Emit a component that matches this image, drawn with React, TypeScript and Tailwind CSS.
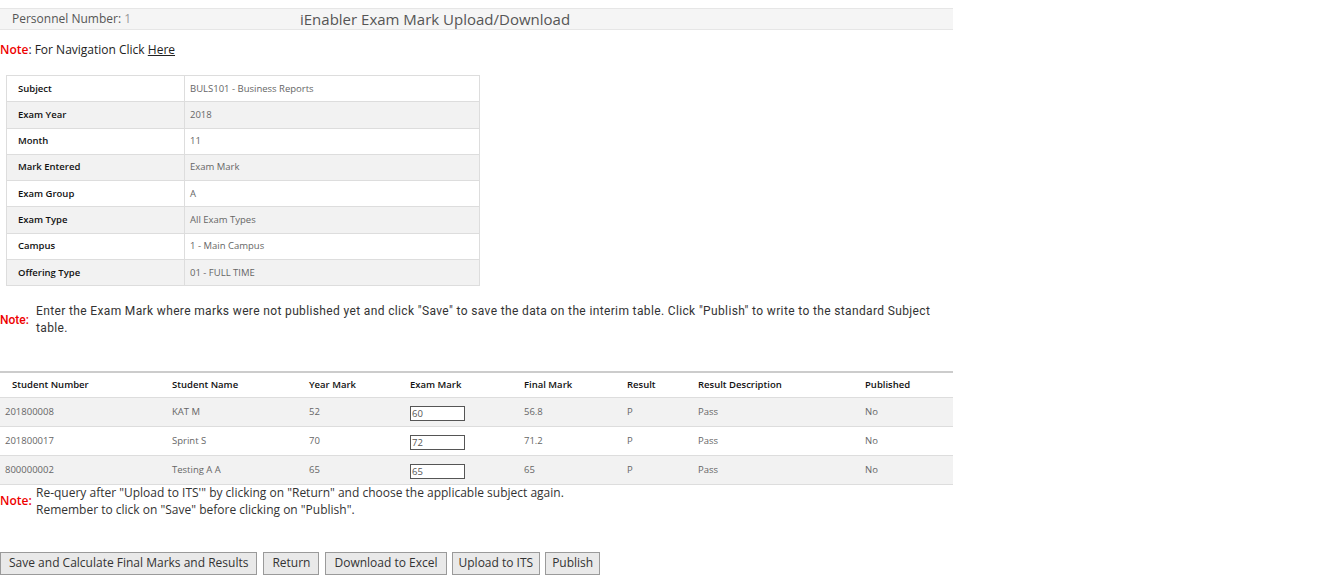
const details: [string, string][] = [
  ['Subject', 'BULS101 - Business Reports'],
  ['Exam Year', '2018'],
  ['Month', '11'],
  ['Mark Entered', 'Exam Mark'],
  ['Exam Group', 'A'],
  ['Exam Type', 'All Exam Types'],
  ['Campus', '1 - Main Campus'],
  ['Offering Type', '01 - FULL TIME'],
];

const students = [
  { num: '201800008', name: 'KAT M', year: '52', exam: '60', final: '56.8', result: 'P', desc: 'Pass', pub: 'No' },
  { num: '201800017', name: 'Sprint S', year: '70', exam: '72', final: '71.2', result: 'P', desc: 'Pass', pub: 'No' },
  { num: '800000002', name: 'Testing A A', year: '65', exam: '65', final: '65', result: 'P', desc: 'Pass', pub: 'No' },
];

const buttons = [
  { label: 'Save and Calculate Final Marks and Results', cls: 'px-[8px]' },
  { label: 'Return', cls: 'px-[8px] ml-[6px]' },
  { label: 'Download to Excel', cls: 'px-[8px] ml-[6px]' },
  { label: 'Upload to ITS', cls: 'px-[6px] ml-[5px]' },
  { label: 'Publish', cls: 'px-[6px] ml-[5px]' },
];

export default function App() {
  return (
    <div className="w-[1341px] h-[583px] bg-white text-[#333] font-['Open_Sans',sans-serif] overflow-hidden">
      {/* Header bar */}
      <div className="pt-2">
        <div className="w-[953px] h-[22px] bg-[#f5f5f5] border-y border-[#e6e6e6] flex items-center">
          <span className="pl-3 w-[300px] text-[12px] text-[#555]">
            Personnel Number: <span className="text-[#999]">1</span>
          </span>
          <span className="text-[15px] text-[#555]">iEnabler Exam Mark Upload/Download</span>
        </div>
      </div>

      <div className="mt-[13px] text-[12px] text-[#222] leading-[14px]">
        <span className="text-[#e00] font-semibold">Note</span>: For Navigation Click <span className="underline">Here</span>
      </div>

      {/* Details table */}
      <table className="ml-[6px] mt-[18px] w-[474px] border-collapse border border-[#ddd] text-[9.5px]">
        <tbody>
          {details.map(([k, v], i) => (
            <tr key={k} className={`h-[26.3px] ${i % 2 ? 'bg-[#f2f2f2]' : 'bg-white'}`}>
              <td className="w-[178px] pl-[11px] border border-[#ddd] font-semibold text-[#111]">{k}</td>
              <td className="pl-[5px] border border-[#ddd] text-[#666]">{v}</td>
            </tr>
          ))}
        </tbody>
      </table>

      {/* Note */}
      <div className="mt-[17px] flex items-center font-['Roboto',sans-serif] w-[953px]">
        <span className="w-[36px] text-[12px] text-[#e00] font-medium shrink-0">Note:</span>
        <span className="text-[12px] leading-[17px] text-[#333] tracking-[0.36px]">
          Enter the Exam Mark where marks were not published yet and click "Save" to save the data on the interim table. Click "Publish" to write to the standard Subject table.
        </span>
      </div>

      {/* Students table */}
      <table className="mt-[34px] w-[953px] border-collapse text-[9.5px] border-t-2 border-[#ccc]">
        <thead>
          <tr className="h-[25px] border-b border-[#ddd]">
            <th className="w-[172px] pl-[12px] text-left font-semibold text-[#111]">Student Number</th>
            <th className="w-[137px] text-left font-semibold text-[#111]">Student Name</th>
            <th className="w-[101px] text-left font-semibold text-[#111]">Year Mark</th>
            <th className="w-[114px] text-left font-semibold text-[#111]">Exam Mark</th>
            <th className="w-[103px] text-left font-semibold text-[#111]">Final Mark</th>
            <th className="w-[71px] text-left font-semibold text-[#111]">Result</th>
            <th className="w-[167px] text-left font-semibold text-[#111]">Result Description</th>
            <th className="text-left font-semibold text-[#111]">Published</th>
          </tr>
        </thead>
        <tbody>
          {students.map((s, i) => (
            <tr key={s.num} className={`h-[29px] border-b border-[#ddd] text-[#666] ${i % 2 ? 'bg-white' : 'bg-[#f2f2f2]'}`}>
              <td className="pl-[5px]">{s.num}</td>
              <td>{s.name}</td>
              <td>{s.year}</td>
              <td>
                <input
                  defaultValue={s.exam}
                  className="w-[55px] h-[15px] border border-[#555] bg-white px-[1px] text-[9.5px] text-[#555] mt-[3px]"
                />
              </td>
              <td>{s.final}</td>
              <td>{s.result}</td>
              <td>{s.desc}</td>
              <td>{s.pub}</td>
            </tr>
          ))}
        </tbody>
      </table>

      {/* Note 2 */}
      <div className="-mt-[1px] flex items-center w-[953px]">
        <span className="w-[36px] text-[12px] text-[#e00] font-semibold shrink-0">Note:</span>
        <span className="text-[12px] leading-[17px] text-[#333]">
          Re-query after "Upload to ITS'" by clicking on "Return" and choose the applicable subject again.
          <br />
          Remember to click on "Save" before clicking on "Publish".
        </span>
      </div>

      {/* Buttons */}
      <div className="mt-[34px] flex">
        {buttons.map((b) => (
          <button
            key={b.label}
            className={`h-[23px] bg-[#e9e9e9] border border-[#9a9a9a] text-[12px] text-[#333] leading-none ${b.cls}`}
          >
            {b.label}
          </button>
        ))}
      </div>
    </div>
  );
}
